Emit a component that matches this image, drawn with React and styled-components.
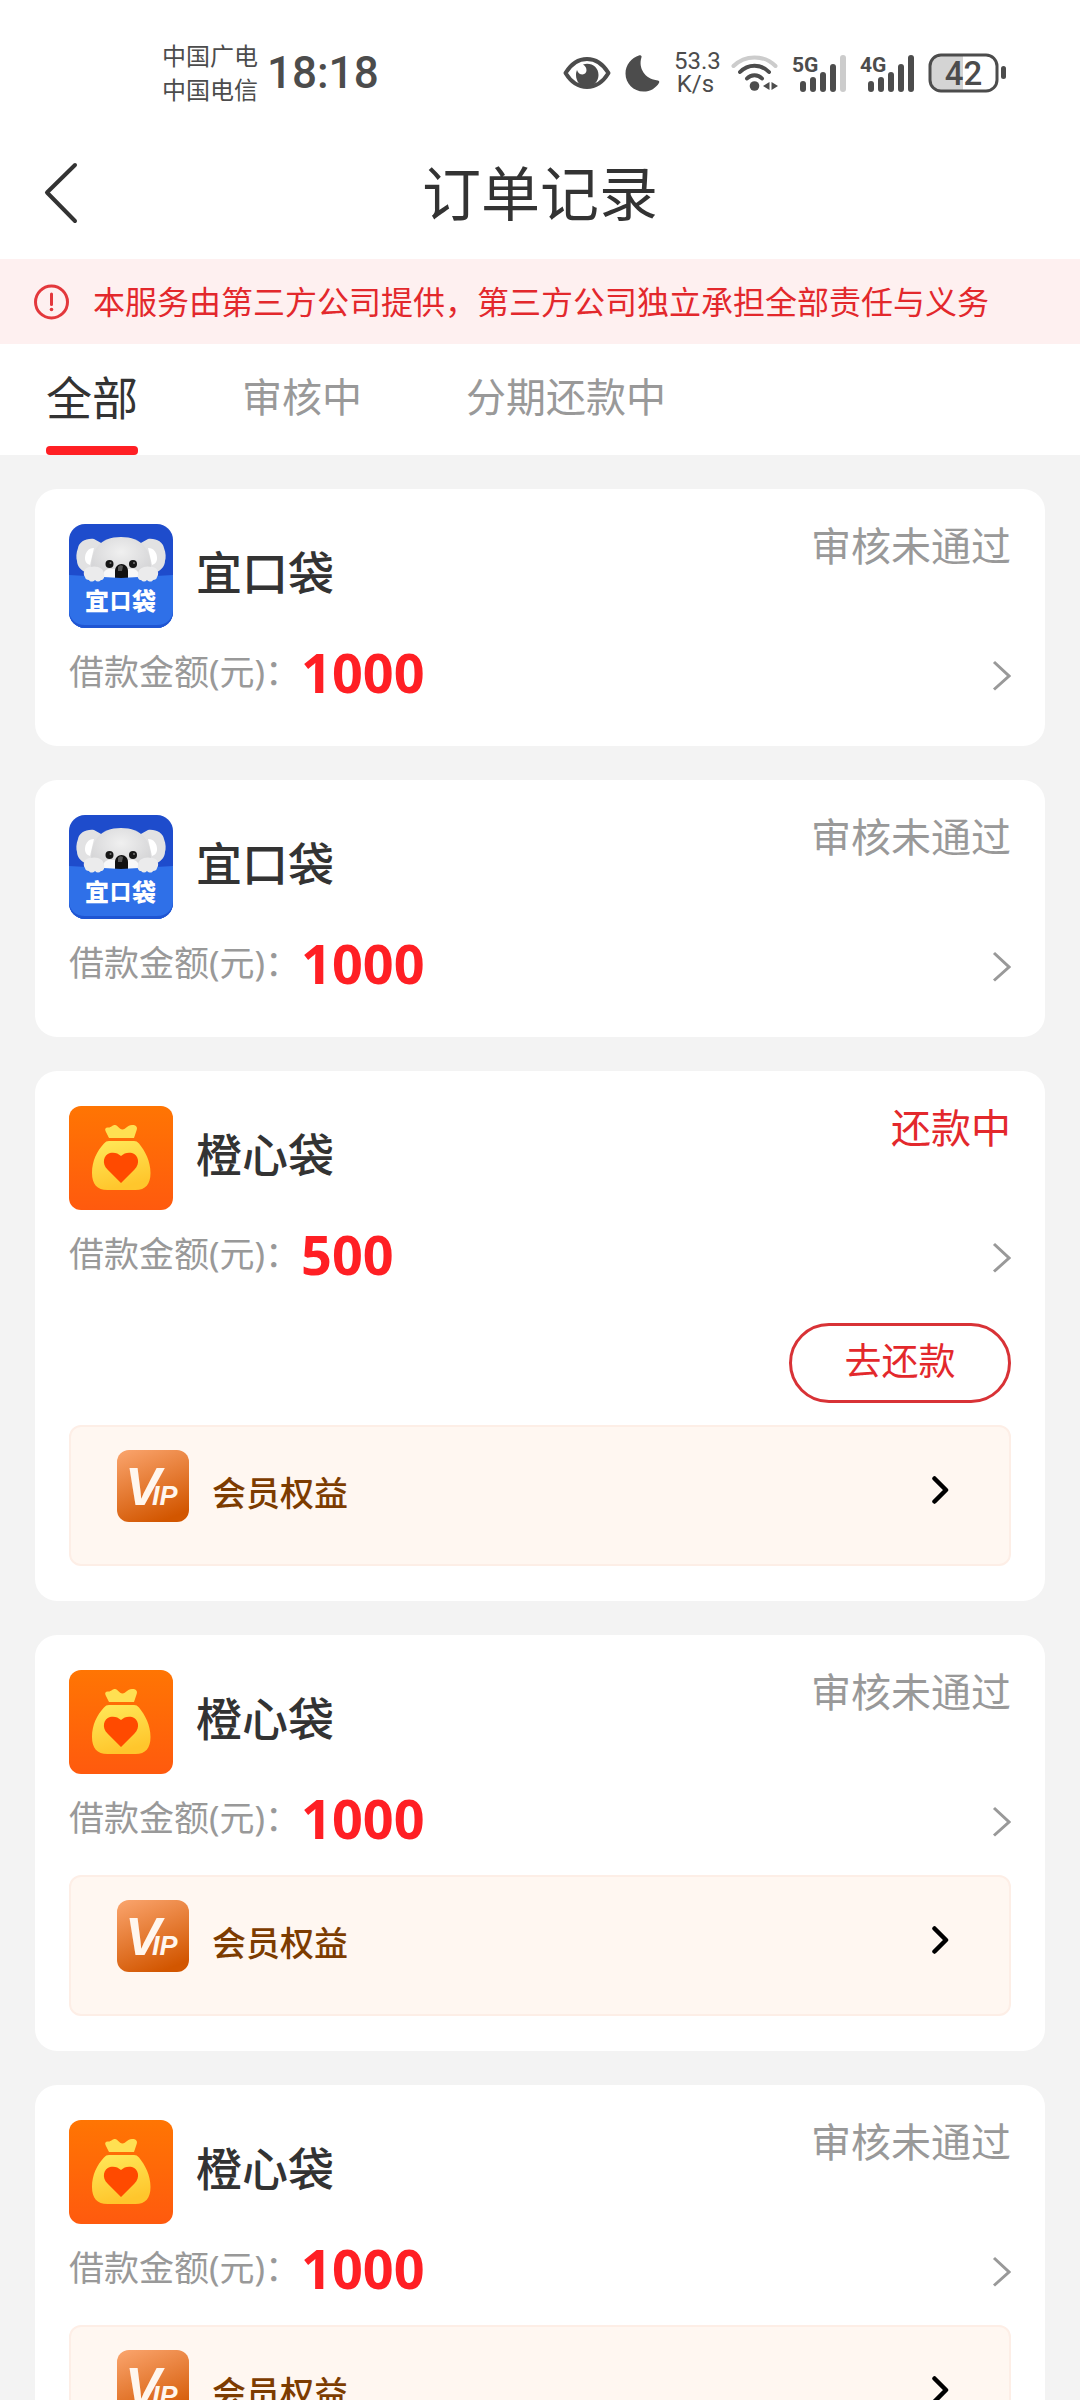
import React, { useState } from 'react';
import styled, { createGlobalStyle } from 'styled-components';

const GlobalStyle = createGlobalStyle`
    * {
        box-sizing: border-box;
    }

    body {
        margin: 0;
        background-color: #f3f3f3;
        color: #333333;
        font-family: 'Noto Sans', 'Noto Sans CJK SC', sans-serif;
    }

    button {
        border: 0;
        padding: 0;
        background: none;
        color: inherit;
        font: inherit;
        cursor: pointer;
    }

    svg {
        display: block;
        flex: none;
    }
`;

const Page = styled.div`
    display: flex;
    flex-direction: column;
    height: 100vh;
`;

const StatusBar = styled.div`
    display: flex;
    align-items: center;
    justify-content: space-between;
    height: 127px;
    flex: none;
    padding: 19px 74px 0 162px;
    background-color: #ffffff;
    color: #4c4c4c;
`;

const StatusGroup = styled.div`
    display: flex;
    align-items: center;
    gap: ${(props) => props.$gap}px;
`;

const Carriers = styled.div`
    font-size: 24px;
    line-height: 34px;
`;

const Clock = styled.time`
    font-family: Roboto, sans-serif;
    font-size: 44px;
    font-weight: 500;
    line-height: 54px;
`;

const Speed = styled.div`
    width: 43px;
    font-family: Roboto, sans-serif;
    font-size: 24px;
    line-height: 23px;
    text-align: center;
    white-space: nowrap;
`;

const Header = styled.header`
    display: grid;
    grid-template-columns: 80px 1fr 80px;
    align-items: center;
    height: 132px;
    flex: none;
    background-color: #ffffff;
`;

const BackButton = styled.button`
    padding-left: 42px;
`;

const Title = styled.h1`
    margin: 0;
    font-size: 59px;
    font-weight: 400;
    line-height: 80px;
    text-align: center;
`;

const Notice = styled.div`
    display: flex;
    align-items: center;
    gap: 24px;
    height: 85px;
    flex: none;
    padding: 0 34px;
    background-color: #fef0f0;
    color: #e3282c;
    font-size: 32px;
    white-space: nowrap;
`;

const NoticeText = styled.span`
    padding-bottom: 4px;
`;

const TabBar = styled.nav`
    display: flex;
    gap: 104px;
    flex: none;
    padding: 4px 46px 0;
    background-color: #ffffff;
`;

const Tab = styled.button`
    color: ${(props) => (props.$active ? '#333333' : '#999999')};
    font-size: ${(props) => (props.$active ? '46px' : '40px')};
    line-height: 98px;

    &::after {
        content: '';
        display: block;
        height: 9px;
        border-radius: 4px;
        background-color: ${(props) => (props.$active ? '#ff1f24' : 'transparent')};
    }
`;

const OrderList = styled.main`
    display: flex;
    flex-direction: column;
    gap: 34px;
    flex: 1;
    min-height: 0;
    padding: 34px 35px;
    overflow-y: auto;
    scrollbar-width: none;
`;

const Card = styled.article`
    flex: none;
    padding: 35px 34px;
    border-radius: 22px;
    background-color: #ffffff;
`;

const CardHead = styled.div`
    display: flex;
    align-items: flex-start;
`;

const ProductName = styled.h2`
    flex: 1;
    margin: 0 0 0 23px;
    font-size: 46px;
    font-weight: 500;
    line-height: 96px;
`;

const OrderStatus = styled.span`
    color: ${(props) => (props.$active ? '#e3282c' : '#999999')};
    font-size: 40px;
    line-height: 44px;
`;

const AmountRow = styled.button`
    display: flex;
    align-items: center;
    width: 100%;
    height: 70px;
    margin: 9px 0 4px;
    text-align: left;
`;

const AmountLabel = styled.span`
    width: 232px;
    color: #999999;
    font-size: 35px;
    line-height: 48px;
    white-space: nowrap;
`;

const Amount = styled.strong`
    flex: 1;
    color: #ff1f24;
    font-size: 54px;
    font-weight: 700;
    line-height: 72px;
`;

const Actions = styled.div`
    display: flex;
    justify-content: flex-end;
    padding-top: 30px;
`;

const RepayButton = styled.button`
    width: 222px;
    height: 80px;
    padding-bottom: 4px;
    border: 3px solid #d83236;
    border-radius: 40px;
    color: #e3282c;
    font-size: 37px;
    line-height: 70px;
`;

const VipRow = styled.button`
    display: flex;
    align-items: flex-end;
    width: 100%;
    margin-top: 22px;
    padding: 23px 60px 42px 46px;
    border: 2px solid #fdeee6;
    border-radius: 12px;
    background-color: #fff7f1;
    text-align: left;
`;

const VipText = styled.span`
    flex: 1;
    margin-left: 23px;
    color: #7d3c00;
    font-size: 34px;
    font-weight: 500;
    line-height: 58px;
`;

const EyeIcon = () => (
    <svg width="48" height="36" viewBox="0 0 48 36" fill="none">
        <path d="M2.500 18C8 9 15 4 24 4s16 5 21.500 14C40 27 33 32 24 32S8 27 2.500 18z" stroke="#4c4c4c" strokeWidth="4" strokeLinejoin="round" />
        <path d="M20 9.500C28 7 35.500 12 35.500 20c0 6-5 12-11.500 12S13 26.500 13 20c0-2 .4-3.500 1-5 1 3 3 4.500 5.500 4.500 5-.5 5.500-7 .5-10z" fill="#4c4c4c" />
    </svg>
);

const MoonIcon = () => (
    <svg width="35" height="38" viewBox="0 0 35 38">
        <path d="M14.500 1.300c1.200-.6 2.500.5 2 2C13 14 20 25 31.500 26.200c2.200.1 3.300 1 2.600 2.500C31 34 25.500 37.500 18.500 37.500 8.500 37.500.5 29.500.5 19.500.5 11 6 4 14.500 1.300z" fill="#4c4c4c" />
    </svg>
);

const WifiIcon = () => (
    <svg width="47" height="38" viewBox="0 0 47 38" fill="none" strokeWidth="4" strokeLinecap="round">
        <path d="M2.500 12C14 .5 33 .5 44.500 12" stroke="#cccccc" />
        <path d="M9 18c8-8.500 21-8.500 29 0" stroke="#4c4c4c" />
        <path d="M16 24.500c4-4.500 11-4.500 15 0" stroke="#4c4c4c" />
        <circle cx="23.500" cy="32" r="4.800" fill="#4c4c4c" />
        <path d="M38.500 28v8l-6.500-4zM40.500 28v8l6.500-4z" fill="#4c4c4c" />
    </svg>
);

const SignalIcon = ({ label, level }) => (
    <svg width="54" height="38" viewBox="0 0 54 38">
        <text x="0" y="18" fill="#4c4c4c" fontFamily="Roboto, sans-serif" fontSize="21" fontWeight="700">{label}</text>
        {[11, 15, 20, 28, 37].map((height, index) => (
            <rect
                key={height}
                x={8 + index * 10}
                y={38 - height}
                width="6"
                height={height}
                rx="3"
                fill={index < level ? '#4c4c4c' : '#cccccc'}
            />
        ))}
    </svg>
);

const BatteryIcon = ({ percent }) => (
    <svg width="78" height="40" viewBox="0 0 78 40">
        <path d="M35 2H13A11 11 0 0 0 2 13v14a11 11 0 0 0 11 11h22z" fill="#d4d4d4" />
        <rect x="2" y="2" width="67" height="36" rx="11" fill="none" stroke="#4c4c4c" strokeWidth="3" />
        <rect x="73" y="13" width="5" height="13" rx="2.500" fill="#4c4c4c" />
        <text x="35.500" y="32" fill="#4c4c4c" fontFamily="Roboto, sans-serif" fontSize="33" fontWeight="500" textAnchor="middle">{percent}</text>
    </svg>
);

const BackIcon = () => (
    <svg width="38" height="64" viewBox="0 0 38 64" fill="none">
        <path d="M33 4L5 31.500 33 60" stroke="#333333" strokeWidth="4" strokeLinecap="round" strokeLinejoin="round" />
    </svg>
);

const AlertIcon = () => (
    <svg width="35" height="36" viewBox="0 0 35 36" fill="none" stroke="#e3383c">
        <circle cx="17.500" cy="18" r="16" strokeWidth="3" />
        <path d="M17.500 10v10.500" strokeWidth="3" strokeLinecap="round" />
        <circle cx="17.500" cy="25.500" r="1.800" fill="#e3383c" stroke="none" />
    </svg>
);

const ArrowIcon = () => (
    <svg width="20" height="38" viewBox="0 0 20 38" fill="none">
        <path d="M3 9l15 14L3 36.500" stroke="#999999" strokeWidth="3" />
    </svg>
);

const VipArrowIcon = () => (
    <svg width="18" height="64" viewBox="0 0 18 64" fill="none">
        <path d="M3.500 20.500L15 32 3.500 43.500" stroke="#000000" strokeWidth="4.500" strokeLinecap="round" strokeLinejoin="round" />
    </svg>
);

const KoalaLogo = () => (
    <svg width="104" height="104" viewBox="0 0 104 104">
        <defs>
            <clipPath id="koalaClip">
                <rect width="104" height="104" rx="16" />
            </clipPath>
            <radialGradient id="koalaFur" cx="50%" cy="35%" r="65%">
                <stop offset="0" stopColor="#f0f0f0" />
                <stop offset="1" stopColor="#d2d2d4" />
            </radialGradient>
        </defs>
        <g clipPath="url(#koalaClip)">
            <rect width="104" height="104" fill="#1e4ccc" />
            <path d="M25 15c-8-1-15 3-16 9-2 5-2 10-1 13 0 5 4 9 8 11l12-2 6-26z" fill="#e2e2e3" />
            <path d="M79 15c8-1 15 3 16 9 2 5 2 10 1 13 0 5-4 9-8 11l-12-2-6-26z" fill="#e2e2e3" />
            <path d="M25 24c-6 0-9 5-9 10 0 4 2 6 5 7z" fill="#ffffff" />
            <path d="M79 24c6 0 9 5 9 10 0 4-2 6-5 7z" fill="#ffffff" />
            <path d="M22 44c0-18 9-31 30-31s30 13 30 31v12H22z" fill="url(#koalaFur)" />
            <path d="M34 52c0-5 4-8 9-7h18c5-1 9 2 9 7v4H34z" fill="#f8f8f8" />
            <circle cx="40.500" cy="40" r="4" fill="#161616" />
            <circle cx="64" cy="40" r="4" fill="#161616" />
            <circle cx="41.500" cy="39" r="1" fill="#777777" />
            <circle cx="65" cy="39" r="1" fill="#777777" />
            <path d="M46 54v-7c0-4 3-7 6.500-7s6.500 3 6.500 7v7z" fill="#111111" />
            <path d="M49 43c1-2 4-2 5-1l-1 5h-4z" fill="#555555" />
            <path d="M0 51l52 3 52-3v53H0z" fill="#2f70e8" />
            <path d="M0 86c0 9 7 15 16 15h72c9 0 16-6 16-15v20H0z" fill="#1f55d2" />
            <path d="M16 53c-3-4 0-10 5-10 7-2 14 1 14 7 1 4-1 6-3 6-2 2-4 2-6 0-2 2-5 2-6 0-2 0-4-1-4-3z" fill="#ebebec" />
            <path d="M88 53c3-4 0-10-5-10-7-2-14 1-14 7-1 4 1 6 3 6 2 2 4 2 6 0 2 2 5 2 6 0 2 0 4-1 4-3z" fill="#ebebec" />
            <g fill="#ffffff" fontFamily="'Noto Sans CJK SC', sans-serif" fontWeight="900">
                <text x="16" y="86" fontSize="24">宜</text>
                <text x="41" y="84" fontSize="21">口</text>
                <text x="63" y="86" fontSize="24">袋</text>
            </g>
        </g>
    </svg>
);

const BagLogo = () => (
    <svg width="104" height="104" viewBox="0 0 104 104">
        <defs>
            <linearGradient id="bagBack" x1="0" y1="0" x2="0" y2="1">
                <stop offset="0" stopColor="#ff7503" />
                <stop offset="1" stopColor="#ff5a0e" />
            </linearGradient>
            <linearGradient id="bagBody" x1="0" y1="0" x2="0.300" y2="1">
                <stop offset="0" stopColor="#ffe95a" />
                <stop offset="1" stopColor="#ffc62c" />
            </linearGradient>
        </defs>
        <rect width="104" height="104" rx="12" fill="url(#bagBack)" />
        <path d="M40 32l-3.500-7c-1-2.500.5-4 3-3.500 3 0 3.500-2.500 6.500-2.500s4 4.500 7.500 4.500S58 19 63 19c4 0 6 2 4.500 5.500L65 32z" fill="#ffe052" />
        <path d="M40 35h25c2 0 3.500.8 5 2.500C76 45 81.500 55 81.500 67c0 11-5 17-15 17h-28C28 84 23 78 23 67c0-12 5-22 12-29.500 1.500-1.700 3-2.500 5-2.500z" fill="url(#bagBody)" />
        <path d="M52 77L38.500 63.500c-6-6-4-14.500 2.500-16.500 4-1 8 0 11 3 3-3 7-4 11-3 6.500 2 8.500 10.500 2.500 16.500z" fill="#ff4a00" />
    </svg>
);

const VipLogo = () => (
    <svg width="72" height="72" viewBox="0 0 72 72">
        <defs>
            <linearGradient id="vipBack" x1="0.200" y1="0" x2="0.600" y2="1">
                <stop offset="0" stopColor="#f8a067" />
                <stop offset="1" stopColor="#d25600" />
            </linearGradient>
        </defs>
        <rect width="72" height="72" rx="12" fill="url(#vipBack)" />
        <text x="8" y="55" fill="#fff6ee" fontFamily="'Liberation Sans', sans-serif" fontSize="54" fontStyle="italic" fontWeight="700">
            V<tspan dx="-9" fontSize="27">IP</tspan>
        </text>
    </svg>
);

const tabs = ['全部', '审核中', '分期还款中'];

const orders = [
    { id: 1, name: '宜口袋', logo: KoalaLogo, amount: 1000, status: '审核未通过' },
    { id: 2, name: '宜口袋', logo: KoalaLogo, amount: 1000, status: '审核未通过' },
    { id: 3, name: '橙心袋', logo: BagLogo, amount: 500, status: '还款中', repaying: true, vip: true },
    { id: 4, name: '橙心袋', logo: BagLogo, amount: 1000, status: '审核未通过', vip: true },
    { id: 5, name: '橙心袋', logo: BagLogo, amount: 1000, status: '审核未通过', vip: true },
];

function OrderCard({ order }) {
    const Logo = order.logo;
    return (
        <Card>
            <CardHead>
                <Logo />
                <ProductName>{order.name}</ProductName>
                <OrderStatus $active={order.repaying}>{order.status}</OrderStatus>
            </CardHead>
            <AmountRow type="button">
                <AmountLabel>借款金额(元)：</AmountLabel>
                <Amount>{order.amount}</Amount>
                <ArrowIcon />
            </AmountRow>
            {order.repaying && (
                <Actions>
                    <RepayButton type="button">去还款</RepayButton>
                </Actions>
            )}
            {order.vip && (
                <VipRow type="button">
                    <VipLogo />
                    <VipText>会员权益</VipText>
                    <VipArrowIcon />
                </VipRow>
            )}
        </Card>
    );
}

function App() {
    const [activeTab, setActiveTab] = useState(tabs[0]);

    return (
        <Page>
            <GlobalStyle />
            <StatusBar>
                <StatusGroup $gap={9}>
                    <Carriers>
                        <div>中国广电</div>
                        <div>中国电信</div>
                    </Carriers>
                    <Clock>18:18</Clock>
                </StatusGroup>
                <StatusGroup $gap={14}>
                    <EyeIcon />
                    <MoonIcon />
                    <Speed>
                        <div>53.3</div>
                        <div>K/s</div>
                    </Speed>
                    <WifiIcon />
                    <SignalIcon label="5G" level={4} />
                    <SignalIcon label="4G" level={5} />
                    <BatteryIcon percent={42} />
                </StatusGroup>
            </StatusBar>
            <Header>
                <BackButton type="button" aria-label="返回">
                    <BackIcon />
                </BackButton>
                <Title>订单记录</Title>
            </Header>
            <Notice>
                <AlertIcon />
                <NoticeText>本服务由第三方公司提供，第三方公司独立承担全部责任与义务</NoticeText>
            </Notice>
            <TabBar>
                {tabs.map((tab) => (
                    <Tab key={tab} type="button" $active={tab === activeTab} onClick={() => setActiveTab(tab)}>
                        {tab}
                    </Tab>
                ))}
            </TabBar>
            <OrderList>
                {orders.map((order) => (
                    <OrderCard key={order.id} order={order} />
                ))}
            </OrderList>
        </Page>
    );
}

export default App;
